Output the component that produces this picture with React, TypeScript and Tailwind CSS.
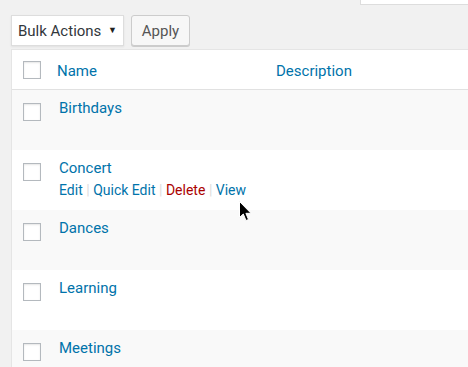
import React from "react";

const rows = ["Birthdays", "Concert", "Dances", "Learning", "Meetings"];

function Check({ className = "" }: { className?: string }) {
  return <div className={"w-[18px] h-[18px] border border-[#b4b9be] bg-white shadow-[inset_0_1px_2px_rgba(0,0,0,0.1)] " + className} />;
}

export default function App() {
  return (
    <div className="relative w-[468px] h-[367px] overflow-hidden bg-[#f1f1f1] text-[15px]" style={{ fontFamily: "Roboto, 'Liberation Sans', sans-serif" }}>
      <div className="absolute left-[360px] top-[-20px] w-[140px] h-[25px] bg-white border border-[#ddd]" />
      <div className="pt-[15px] pl-[11px] flex gap-[7px]">
        <div className="w-[113px] h-[31px] bg-white border border-[#ddd] flex items-center justify-between pl-[6px] pr-[6px] pt-[1px] text-[#32373c] shadow-[0_1px_2px_rgba(0,0,0,0.07)]">
          <span>Bulk Actions</span>
          <span className="text-[9px] text-[#222]">▼</span>
        </div>
        <div className="w-[59px] h-[31px] rounded-[3px] border border-[#ccc] bg-[#f7f7f7] shadow-[0_1px_0_#ccc] flex items-center justify-center pt-[1px] text-[#555]">Apply</div>
      </div>
      <div className="mt-[3px] ml-[11px] w-[500px] border-l border-t border-[#e5e5e5] bg-white">
        <div className="h-[40px] border-b border-[#e1e1e1] flex items-center relative">
          <Check className="ml-[11px]" />
          <span className="absolute left-[45px] top-[10px] text-[#0073aa]">Name</span>
          <span className="absolute left-[264px] top-[10px] text-[#0073aa]">Description</span>
        </div>
        {rows.map((r, i) => (
          <div key={r} className={"h-[60px] relative " + (i % 2 === 0 ? "bg-[#f9f9f9]" : "bg-white")}>
            <Check className="absolute left-[11px] top-[13px]" />
            <div className="absolute left-[47px] top-[8px] leading-[20px] text-[#0073aa]">{r}</div>
            {r === "Concert" && (
              <div className="absolute left-[47px] top-[30px] leading-[20px] text-[14px] text-[#0073aa] flex">
                <span>Edit</span>
                <span className="text-[#ddd] px-[3.5px]">|</span>
                <span>Quick Edit</span>
                <span className="text-[#ddd] px-[3.5px]">|</span>
                <span className="text-[#a00]">Delete</span>
                <span className="text-[#ddd] px-[3.5px]">|</span>
                <span>View</span>
              </div>
            )}
          </div>
        ))}
      </div>
      <svg className="absolute left-[239px] top-[201px]" width="14" height="21" viewBox="0 0 14 21">
        <path d="M0.5 0.5 L0.5 16.5 L4.3 13 L7 19.5 L9.5 18.5 L6.9 12.3 L12 12.3 Z" fill="#000" stroke="#fff" strokeWidth="1" strokeLinejoin="round" />
      </svg>
    </div>
  );
}
